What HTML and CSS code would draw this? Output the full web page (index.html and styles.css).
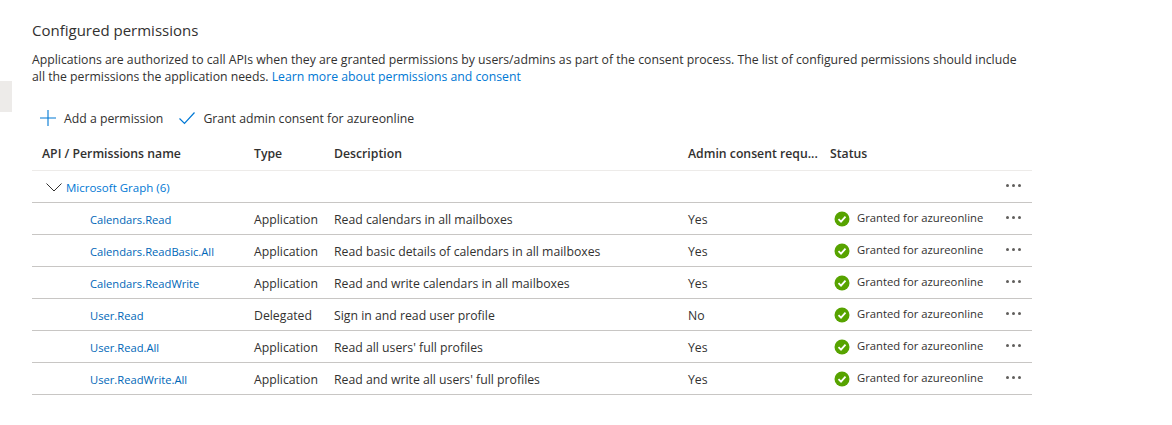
FILE: index.html
```html
<!DOCTYPE html>
<html lang="en">
<head>
    <meta charset="UTF-8">
    <title>Configured permissions</title>
    <link rel="stylesheet" href="styles.css">
</head>
<body>
    <div class="page">
        <div class="side-stub"></div>
        <main class="content">
            <h2 class="title">Configured permissions</h2>
            <p class="intro">Applications are authorized to call APIs when they are granted permissions by users/admins as part of the consent process. The list of configured permissions should include all the permissions the application needs. <a href="#" class="link">Learn more about permissions and consent</a></p>
            <div class="toolbar">
                <button type="button" class="tool">
                    <svg class="tool-icon" width="16" height="16" viewBox="0 0 16 16"><path d="M8 0v16M0 8h16" fill="none" stroke="#0078d4" stroke-width="1.1"/></svg>
                    Add a permission
                </button>
                <button type="button" class="tool">
                    <svg class="tool-icon" width="16" height="16" viewBox="0 0 16 16"><path d="M.5 8.500l5 5L15.500 2.500" fill="none" stroke="#0078d4" stroke-width="1.200"/></svg>
                    Grant admin consent for azureonline
                </button>
            </div>
            <div class="row row-head">
                <div class="cell-name">API / Permissions name</div>
                <div>Type</div>
                <div>Description</div>
                <div>Admin consent requ...</div>
                <div>Status</div>
            </div>
            <div class="row row-group">
                <div class="cell-name group-name">
                    <svg class="chevron" width="16" height="9" viewBox="0 0 16 9"><path d="M.5.500L8 8 15.500.500" fill="none" stroke="#323130" stroke-width="1"/></svg>
                    <a href="#" class="link">Microsoft Graph (6)</a>
                </div>
                <div></div><div></div><div></div><div></div>
                <div class="more"><i></i><i></i><i></i></div>
            </div>
            <div class="row">
                <div class="cell-perm"><a href="#" class="perm-link">Calendars.Read</a></div>
                <div>Application</div>
                <div>Read calendars in all mailboxes</div>
                <div>Yes</div>
                <div class="status"><svg class="ok" width="16" height="16" viewBox="0 0 16 16"><circle cx="8" cy="8" r="7.500" fill="#57a300"/><path d="M4.500 8.200l2.500 2.500 4.500-5" fill="none" stroke="#fff" stroke-width="1.800"/></svg>Granted for azureonline</div>
                <div class="more"><i></i><i></i><i></i></div>
            </div>
            <div class="row">
                <div class="cell-perm"><a href="#" class="perm-link">Calendars.ReadBasic.All</a></div>
                <div>Application</div>
                <div>Read basic details of calendars in all mailboxes</div>
                <div>Yes</div>
                <div class="status"><svg class="ok" width="16" height="16" viewBox="0 0 16 16"><circle cx="8" cy="8" r="7.500" fill="#57a300"/><path d="M4.500 8.200l2.500 2.500 4.500-5" fill="none" stroke="#fff" stroke-width="1.800"/></svg>Granted for azureonline</div>
                <div class="more"><i></i><i></i><i></i></div>
            </div>
            <div class="row">
                <div class="cell-perm"><a href="#" class="perm-link">Calendars.ReadWrite</a></div>
                <div>Application</div>
                <div>Read and write calendars in all mailboxes</div>
                <div>Yes</div>
                <div class="status"><svg class="ok" width="16" height="16" viewBox="0 0 16 16"><circle cx="8" cy="8" r="7.500" fill="#57a300"/><path d="M4.500 8.200l2.500 2.500 4.500-5" fill="none" stroke="#fff" stroke-width="1.800"/></svg>Granted for azureonline</div>
                <div class="more"><i></i><i></i><i></i></div>
            </div>
            <div class="row">
                <div class="cell-perm"><a href="#" class="perm-link">User.Read</a></div>
                <div>Delegated</div>
                <div>Sign in and read user profile</div>
                <div>No</div>
                <div class="status"><svg class="ok" width="16" height="16" viewBox="0 0 16 16"><circle cx="8" cy="8" r="7.500" fill="#57a300"/><path d="M4.500 8.200l2.500 2.500 4.500-5" fill="none" stroke="#fff" stroke-width="1.800"/></svg>Granted for azureonline</div>
                <div class="more"><i></i><i></i><i></i></div>
            </div>
            <div class="row">
                <div class="cell-perm"><a href="#" class="perm-link">User.Read.All</a></div>
                <div>Application</div>
                <div>Read all users' full profiles</div>
                <div>Yes</div>
                <div class="status"><svg class="ok" width="16" height="16" viewBox="0 0 16 16"><circle cx="8" cy="8" r="7.500" fill="#57a300"/><path d="M4.500 8.200l2.500 2.500 4.500-5" fill="none" stroke="#fff" stroke-width="1.800"/></svg>Granted for azureonline</div>
                <div class="more"><i></i><i></i><i></i></div>
            </div>
            <div class="row">
                <div class="cell-perm"><a href="#" class="perm-link">User.ReadWrite.All</a></div>
                <div>Application</div>
                <div>Read and write all users' full profiles</div>
                <div>Yes</div>
                <div class="status"><svg class="ok" width="16" height="16" viewBox="0 0 16 16"><circle cx="8" cy="8" r="7.500" fill="#57a300"/><path d="M4.500 8.200l2.500 2.500 4.500-5" fill="none" stroke="#fff" stroke-width="1.800"/></svg>Granted for azureonline</div>
                <div class="more"><i></i><i></i><i></i></div>
            </div>
        </main>
    </div>
</body>
</html>
```

FILE: styles.css
```css
body {
    margin: 0;
    background: #fff;
    color: #323130;
    font-family: "Open Sans", "Noto Sans", sans-serif;
    font-size: 12.25px;
}
.page {
    display: flex;
}
.side-stub {
    flex: none;
    width: 12px;
    height: 31px;
    margin-top: 81px;
    background: #edebe9;
}
.content {
    width: 1000px;
    margin-left: 20px;
}
.title {
    margin: 20px 0 0;
    font-size: 15px;
    font-weight: 400;
    line-height: 20px;
}
.intro {
    margin: 11px 0 0;
    width: 995px;
    line-height: 17px;
}
.link {
    color: #0078d4;
    text-decoration: none;
}
.perm-link {
    color: #0067b8;
    font-size: 11.2px;
    text-decoration: none;
}
.toolbar {
    display: flex;
    gap: 16px;
    margin-top: 15px;
    height: 36px;
    align-items: center;
}
.tool {
    display: flex;
    align-items: center;
    padding: 0;
    border: 0;
    background: none;
    color: #323130;
    font: inherit;
}
.tool:first-child {
    margin-left: 8px;
}
.tool-icon {
    margin-right: 8px;
}
.row {
    display: grid;
    grid-template-columns: 222px 80px 354px 142px 176px 26px;
    align-items: center;
    height: 30px;
    padding-top: 1px;
    border-bottom: 1px solid #c8c6c4;
}
.row-head {
    height: 34px;
    padding-top: 0;
    font-weight: 600;
    border-bottom-color: #edebe9;
}
.row-head .cell-name {
    padding-left: 10px;
}
.cell-name,
.group-name {
    display: flex;
    align-items: center;
}
.group-name {
    padding-left: 14px;
}
.group-name .link {
    font-size: 11.5px;
}
.chevron {
    margin-right: 4px;
}
.cell-perm {
    padding-left: 58px;
}
.status {
    display: flex;
    align-items: center;
    padding-left: 4px;
    margin-top: -4px;
    font-size: 11.27px;
}
.ok {
    margin-right: 7px;
    margin-top: 3px;
}
.more {
    display: flex;
    gap: 3px;
    margin-top: -4px;
}
.more i {
    width: 3px;
    height: 3px;
    border-radius: 50%;
    background: #605e5c;
}
```
